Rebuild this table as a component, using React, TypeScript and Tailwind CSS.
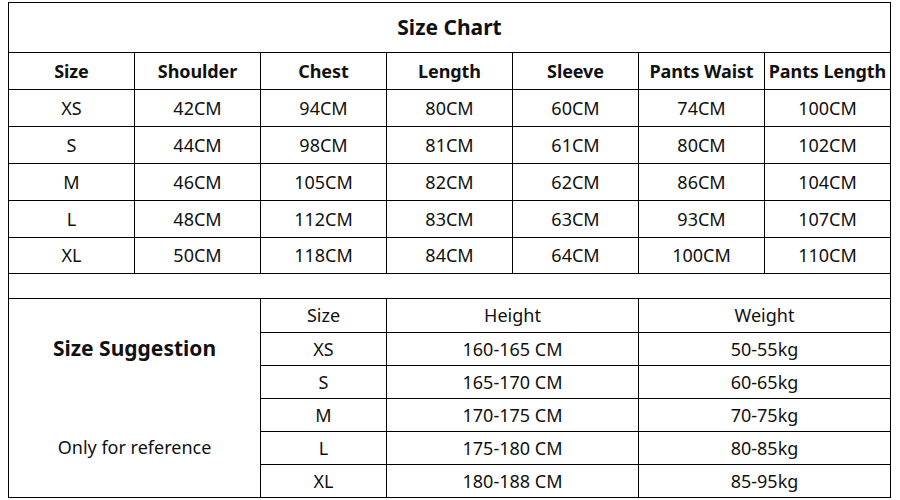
const headers = ["Size", "Shoulder", "Chest", "Length", "Sleeve", "Pants Waist", "Pants Length"];

const rows = [
  ["XS", "42CM", "94CM", "80CM", "60CM", "74CM", "100CM"],
  ["S", "44CM", "98CM", "81CM", "61CM", "80CM", "102CM"],
  ["M", "46CM", "105CM", "82CM", "62CM", "86CM", "104CM"],
  ["L", "48CM", "112CM", "83CM", "63CM", "93CM", "107CM"],
  ["XL", "50CM", "118CM", "84CM", "64CM", "100CM", "110CM"],
];

const suggestions = [
  ["XS", "160-165 CM", "50-55kg"],
  ["S", "165-170 CM", "60-65kg"],
  ["M", "170-175 CM", "70-75kg"],
  ["L", "175-180 CM", "80-85kg"],
  ["XL", "180-188 CM", "85-95kg"],
];

const cell = "flex items-center justify-center border-r border-b border-black";

export default function App() {
  return (
    <div className="h-[500px] w-[900px] bg-white pl-[8px] pt-[2px] font-['Noto_Sans',sans-serif] text-[#111]">
      <div className="w-[883px] border-t border-l border-black">
        <div className={`${cell} h-[50px] text-[21px] font-bold`}>Size Chart</div>

        <div className="grid grid-cols-[126px_126px_126px_126px_126px_126px_126px] grid-rows-[37px_37px_37px_37px_37px_36px]">
          {headers.map((h) => (
            <div key={h} className={`${cell} whitespace-nowrap text-[18px] font-bold tracking-[-0.1px]`}>
              {h}
            </div>
          ))}
          {rows.map((r) =>
            r.map((v, i) => (
              <div key={r[0] + i} className={`${cell} text-[18px]`}>
                {v}
              </div>
            ))
          )}
        </div>

        <div className={`${cell} h-[25px]`} />

        <div className="grid grid-cols-[252px_126px_252px_252px] grid-rows-[34px_33px_33px_33px_33px_33px]">
          <div className={`${cell} row-span-6 flex-col justify-start pt-[36px] pb-[38px]`}>
            <span className="text-[21px] font-bold leading-[26px]">Size Suggestion</span>
            <span className="mt-auto text-[18px] leading-[24px]">Only for reference</span>
          </div>
          <div className={`${cell} text-[18px]`}>Size</div>
          <div className={`${cell} text-[18px]`}>Height</div>
          <div className={`${cell} text-[18px]`}>Weight</div>
          {suggestions.map((s) =>
            s.map((v, i) => (
              <div key={s[0] + i} className={`${cell} text-[18px]`}>
                {v}
              </div>
            ))
          )}
        </div>
      </div>
    </div>
  );
}
